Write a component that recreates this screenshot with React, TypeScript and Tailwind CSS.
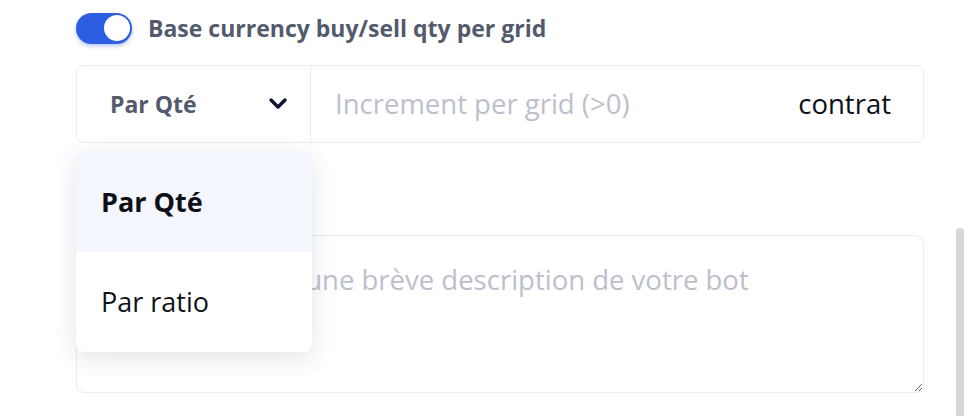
import { useState } from "react";

const font = { fontFamily: "'Open Sans', 'Noto Sans', sans-serif" };

function Chevron() {
  return (
    <svg width="20" height="14" viewBox="0 0 20 14" fill="none">
      <polyline points="3,3 10,10 17,3" stroke="#0d1330" strokeWidth="3.4" strokeLinecap="round" strokeLinejoin="round" />
    </svg>
  );
}

export default function App() {
  const [on, setOn] = useState(true);
  const [mode, setMode] = useState("Par Qté");

  return (
    <div className="relative w-[978px] h-[416px] overflow-hidden bg-white" style={font}>
      <div className="ml-[76px] w-[848px] pt-3">
        <div className="flex items-center gap-4 h-8">
          <button
            onClick={() => setOn(!on)}
            className="relative w-[56px] h-[31px] rounded-full bg-[#2d5de0] shadow-[0_2px_4px_rgba(45,93,224,0.35)]"
          >
            <span className="absolute right-[2px] top-[2.5px] w-[26px] h-[26px] rounded-full bg-white" />
          </button>
          <span className="text-[23px] font-bold text-[#535a6b] leading-none">Base currency buy/sell qty per grid</span>
        </div>

        <div className="mt-[21px] flex h-[78px] rounded-lg border border-[#e8ebf2]">
          <div className="flex items-center justify-between w-[234px] border-r border-[#e8ebf2] pl-[33px] pr-[22px]">
            <span className="text-[23px] font-bold text-[#535a6b]">{mode}</span>
            <Chevron />
          </div>
          <div className="flex flex-1 items-center pl-6 pr-8">
            <input
              className="flex-1 outline-none text-[27.5px] text-[#1a1d24] placeholder:text-[#bcc0cc] bg-transparent"
              placeholder="Increment per grid (>0)"
            />
            <span className="text-[27.5px] text-[#0d1117]">contrat</span>
          </div>
        </div>

        <div className="h-[14px]" />
        <div className="h-[78px]" />

        <textarea
          className="block w-full h-[158px] rounded-lg border border-[#e8ebf2] px-6 py-[26px] text-[27.5px] leading-[36px] outline-none placeholder:text-[#bcc0cc]"
          placeholder="Veuillez rédiger une brève description de votre bot"
        />
      </div>

      <div className="absolute left-[76px] top-[152px] w-[236px] rounded-lg bg-white shadow-[0_6px_24px_rgba(20,30,60,0.12)] overflow-hidden">
        {["Par Qté", "Par ratio"].map((m) => (
          <div
            key={m}
            onClick={() => setMode(m)}
            className={
              m === mode
                ? "h-[100px] flex items-center pl-[25px] bg-[#f3f7fd] text-[27px] font-bold text-[#0d1117]"
                : "h-[100px] flex items-center pl-[25px] text-[27px] text-[#0d1117]"
            }
          >
            {m}
          </div>
        ))}
      </div>

      <div className="absolute left-[956px] top-[228px] w-[8px] h-[200px] rounded-full bg-[#d6d6d6]" />
    </div>
  );
}
